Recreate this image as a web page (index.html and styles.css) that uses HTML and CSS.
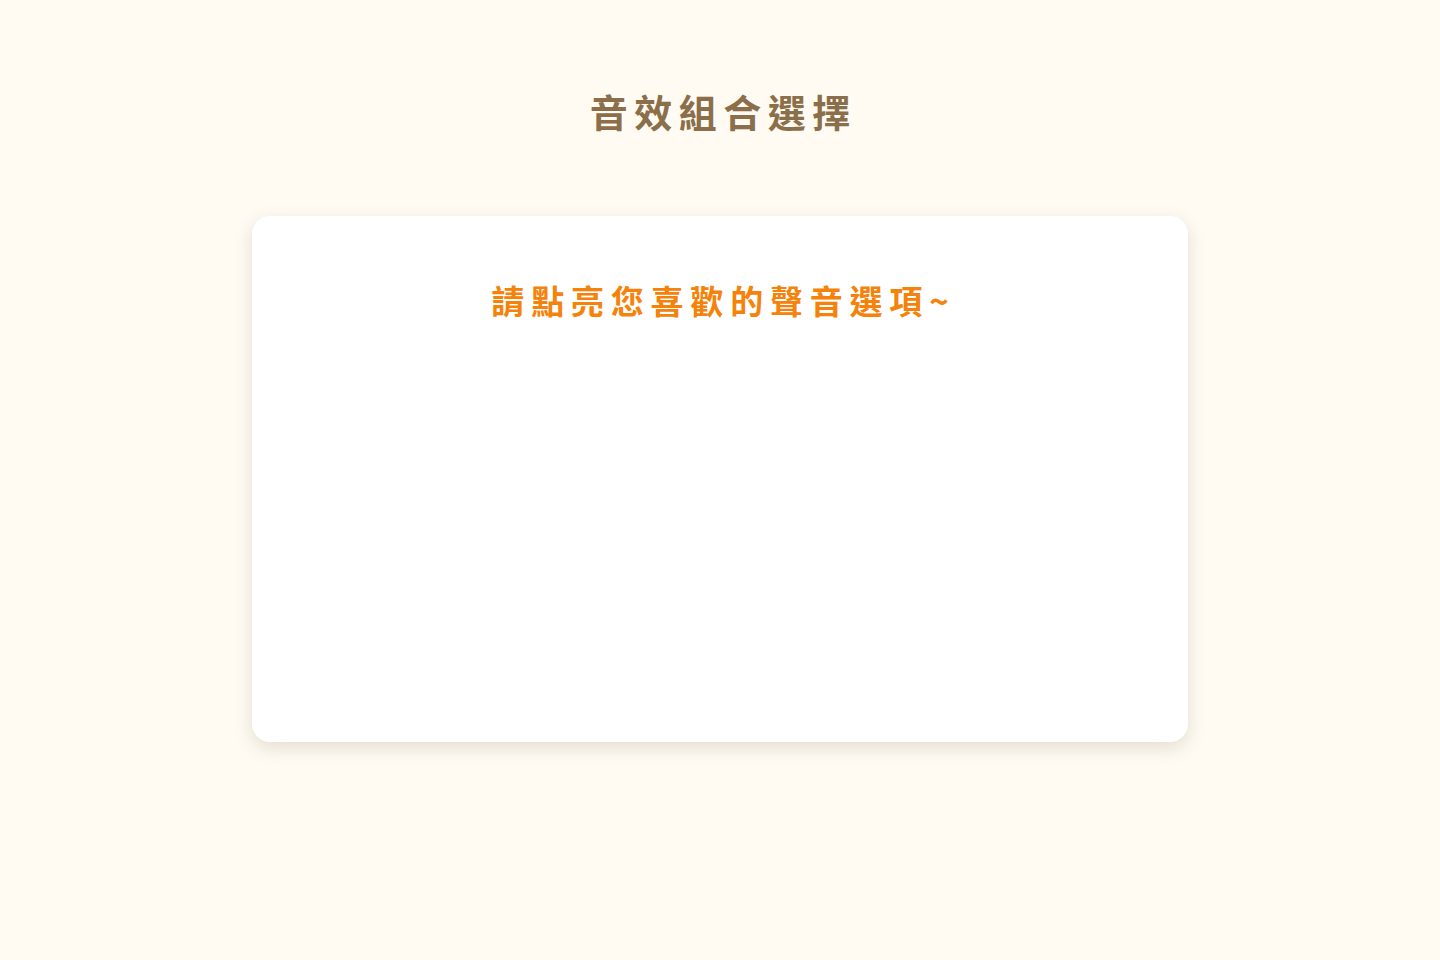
FILE: index.html
```html
<!DOCTYPE html>
<html lang="zh-Hant">
<head>
<meta charset="utf-8">
<title>音效組合選擇</title>
<link rel="stylesheet" href="styles.css">
</head>
<body>
<main class="page">
  <h1 class="title">音效組合選擇</h1>
  <section class="card">
    <h2 class="prompt">請點亮您喜歡的聲音選項~</h2>
  </section>
</main>
</body>
</html>
```
FILE: styles.css
```css
html, body {
  margin: 0;
  padding: 0;
}
body {
  background: #fffbf3;
  font-family: "Noto Sans CJK TC", "Noto Sans", sans-serif;
  min-height: 960px;
}
.page {
  display: flex;
  flex-direction: column;
  align-items: center;
  padding-top: 86px;
}
.title {
  margin: 0;
  font-size: 38px;
  line-height: 50px;
  font-weight: 700;
  letter-spacing: 6.5px;
  padding-left: 6.5px;
  color: #8b6f4a;
}
.card {
  box-sizing: border-box;
  margin-top: 80px;
  width: 936px;
  height: 526px;
  background: #ffffff;
  border-radius: 18px;
  box-shadow: 0 6px 18px rgba(90, 70, 40, 0.16);
  padding-top: 61px;
  display: flex;
  flex-direction: column;
  align-items: center;
}
.prompt {
  margin: 0;
  font-size: 33px;
  line-height: 46px;
  font-weight: 700;
  letter-spacing: 6.8px;
  padding-left: 6.8px;
  color: #f5820a;
}
```
